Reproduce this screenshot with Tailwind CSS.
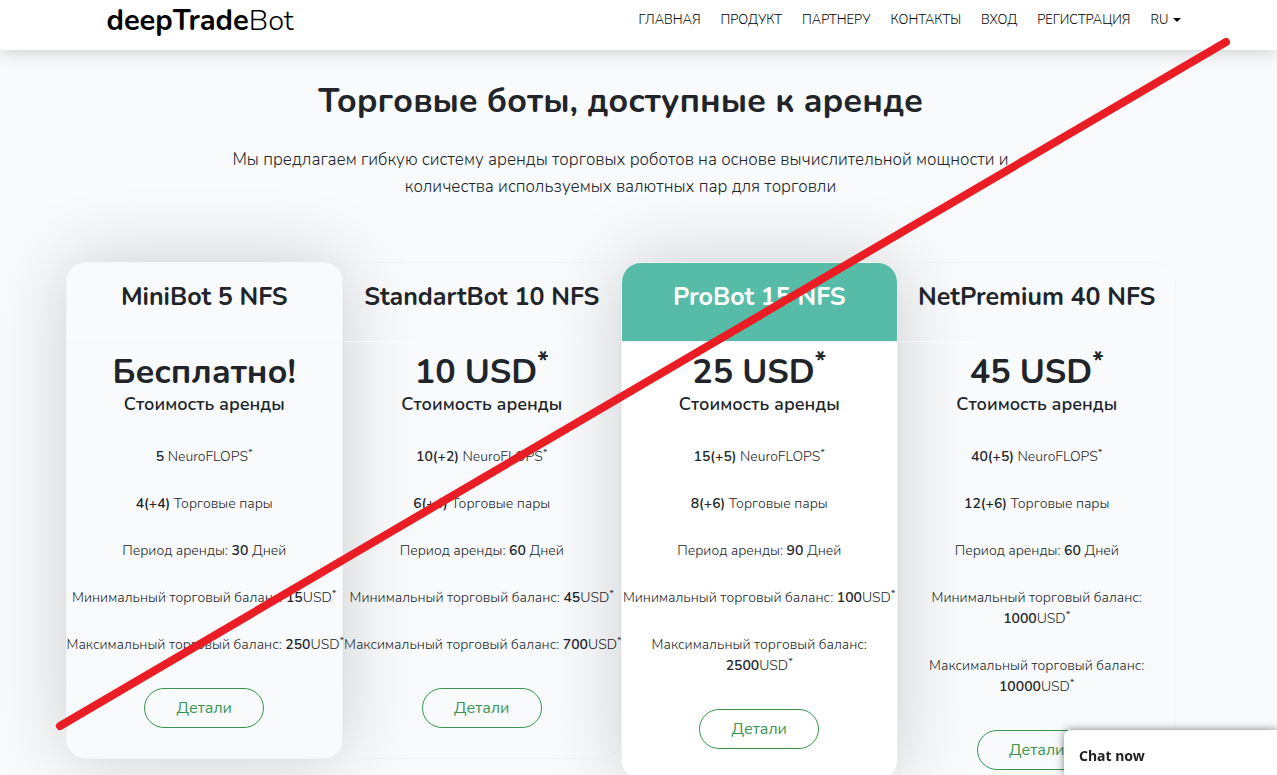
<!DOCTYPE html>
<html lang="ru">
<head>
  <meta charset="UTF-8" />
  <meta name="viewport" content="width=device-width, initial-scale=1.0" />
  <title>deepTradeBot</title>
  <script src="https://cdn.jsdelivr.net/npm/@tailwindcss/browser@4"></script>
</head>
<body class="relative bg-[#f8fafc] text-[#212529] font-['Nunito','Lato','Open_Sans',sans-serif] overflow-x-hidden">

  <!-- Navbar -->
  <header class="relative z-10 bg-white shadow-[0_2px_18px_rgba(0,0,0,0.18)] pr-9">
    <div class="max-w-[1140px] h-[50px] mx-auto pl-14 flex items-start justify-between text-black">
      <a href="#" class="text-[29px] leading-[41px] font-light"><b class="font-bold">deepTrade</b>Bot</a>
      <nav class="flex gap-5 pt-2 pr-[10px] text-[13px] leading-6 font-light">
        <a href="#">ГЛАВНАЯ</a>
        <a href="#">ПРОДУКТ</a>
        <a href="#">ПАРТНЕРУ</a>
        <a href="#">КОНТАКТЫ</a>
        <a href="#">ВХОД</a>
        <a href="#">РЕГИСТРАЦИЯ</a>
        <a href="#" class="flex items-center gap-1">RU
          <svg class="w-2 h-1" viewBox="0 0 8 4"><path d="M0 0h8L4 4z" fill="currentColor"/></svg>
        </a>
      </nav>
    </div>
  </header>

  <main class="pr-9 pt-7 pb-10 text-center">
    <h1 class="text-[34px] leading-[46px] font-bold">Торговые боты, доступные к аренде</h1>
    <p class="mt-[22px] mb-[62px] text-[17px] leading-[27px] font-light">Мы предлагаем гибкую систему аренды торговых роботов на основе вычислительной мощности и<br>количества используемых валютных пар для торговли</p>

    <!-- Plans -->
    <div class="max-w-[1110px] mx-auto grid grid-cols-4 items-start text-sm leading-[21px] font-light whitespace-nowrap">

      <section class="relative rounded-[20px] border border-black/2 bg-[#f8fafc] shadow-[0_0_75px_rgba(0,0,0,0.18)]">
        <h2 class="h-[79px] pt-[18px] border-b border-black/2 text-[25px] leading-8 font-bold">MiniBot 5 NFS</h2>
        <div class="pt-[10px] pb-[30px]">
          <p class="text-[34px] leading-[41px] font-bold">Бесплатно!</p>
          <h3 class="text-lg leading-[22px] font-semibold">Стоимость аренды</h3>
          <ul class="mt-[31px] mb-[33px] space-y-[26px]">
            <li><b class="font-semibold">5</b> NeuroFLOPS<sup>*</sup></li>
            <li><b class="font-semibold">4(+4)</b> Торговые пары</li>
            <li>Период аренды: <b class="font-semibold">30</b> Дней</li>
            <li>Минимальный торговый баланс: <b class="font-semibold">15</b>USD<sup>*</sup></li>
            <li>Максимальный торговый баланс: <b class="font-semibold">250</b>USD<sup>*</sup></li>
          </ul>
          <button class="w-[120px] h-10 rounded-full border border-[#38954f] text-[#38954f] text-base font-normal">Детали</button>
        </div>
      </section>

      <section class="relative rounded-[20px] border border-black/2">
        <h2 class="h-[79px] pt-[18px] border-b border-white/60 text-[25px] leading-8 font-bold">StandartBot 10 NFS</h2>
        <div class="pt-[10px] pb-[30px]">
          <p class="text-[34px] leading-[41px] font-bold">10 USD<sup>*</sup></p>
          <h3 class="text-lg leading-[22px] font-semibold">Стоимость аренды</h3>
          <ul class="mt-[31px] mb-[33px] space-y-[26px]">
            <li><b class="font-semibold">10(+2)</b> NeuroFLOPS<sup>*</sup></li>
            <li><b class="font-semibold">6(+4)</b> Торговые пары</li>
            <li>Период аренды: <b class="font-semibold">60</b> Дней</li>
            <li>Минимальный торговый баланс: <b class="font-semibold">45</b>USD<sup>*</sup></li>
            <li>Максимальный торговый баланс: <b class="font-semibold">700</b>USD<sup>*</sup></li>
          </ul>
          <button class="w-[120px] h-10 rounded-full border border-[#38954f] text-[#38954f] text-base font-normal">Детали</button>
        </div>
      </section>

      <section class="relative rounded-[20px] border border-[#f0f4f4] bg-white shadow-[0_0_75px_rgba(0,0,0,0.18)]">
        <h2 class="h-[79px] pt-[18px] rounded-t-[19px] bg-[#57bca7] border-b border-[#f0f4f4] text-white text-[25px] leading-8 font-bold">ProBot 15 NFS</h2>
        <div class="pt-[10px] pb-[30px]">
          <p class="text-[34px] leading-[41px] font-bold">25 USD<sup>*</sup></p>
          <h3 class="text-lg leading-[22px] font-semibold">Стоимость аренды</h3>
          <ul class="mt-[31px] mb-[33px] space-y-[26px]">
            <li><b class="font-semibold">15(+5)</b> NeuroFLOPS<sup>*</sup></li>
            <li><b class="font-semibold">8(+6)</b> Торговые пары</li>
            <li>Период аренды: <b class="font-semibold">90</b> Дней</li>
            <li>Минимальный торговый баланс: <b class="font-semibold">100</b>USD<sup>*</sup></li>
            <li>Максимальный торговый баланс:<br><b class="font-semibold">2500</b>USD<sup>*</sup></li>
          </ul>
          <button class="w-[120px] h-10 rounded-full border border-[#38954f] text-[#38954f] text-base font-normal">Детали</button>
        </div>
      </section>

      <section class="relative rounded-[20px] border border-black/2">
        <h2 class="h-[79px] pt-[18px] border-b border-white/60 text-[25px] leading-8 font-bold">NetPremium 40 NFS</h2>
        <div class="pt-[10px] pb-[30px]">
          <p class="text-[34px] leading-[41px] font-bold">45 USD<sup>*</sup></p>
          <h3 class="text-lg leading-[22px] font-semibold">Стоимость аренды</h3>
          <ul class="mt-[31px] mb-[33px] space-y-[26px]">
            <li><b class="font-semibold">40(+5)</b> NeuroFLOPS<sup>*</sup></li>
            <li><b class="font-semibold">12(+6)</b> Торговые пары</li>
            <li>Период аренды: <b class="font-semibold">60</b> Дней</li>
            <li>Минимальный торговый баланс:<br><b class="font-semibold">1000</b>USD<sup>*</sup></li>
            <li>Максимальный торговый баланс:<br><b class="font-semibold">10000</b>USD<sup>*</sup></li>
          </ul>
          <button class="w-[120px] h-10 rounded-full border border-[#38954f] text-[#38954f] text-base font-normal">Детали</button>
        </div>
      </section>
    </div>
  </main>

  <!-- Chat widget -->
  <button class="fixed right-0 bottom-0 z-20 w-[213px] h-[45px] pl-[15px] pt-[6px] rounded-tl-md bg-white text-left text-[#222] text-sm font-bold font-['Noto_Sans',sans-serif] shadow-[0_0_8px_rgba(0,0,0,0.5)]">Chat now</button>

  <!-- Strike line -->
  <svg class="absolute left-0 top-0 z-30 w-[1277px] h-[775px] pointer-events-none" viewBox="0 0 1277 775" fill="none">
    <path d="M60 726L1226 42" stroke="#ea1c24" stroke-width="8" stroke-linecap="round"/>
  </svg>
</body>
</html>
